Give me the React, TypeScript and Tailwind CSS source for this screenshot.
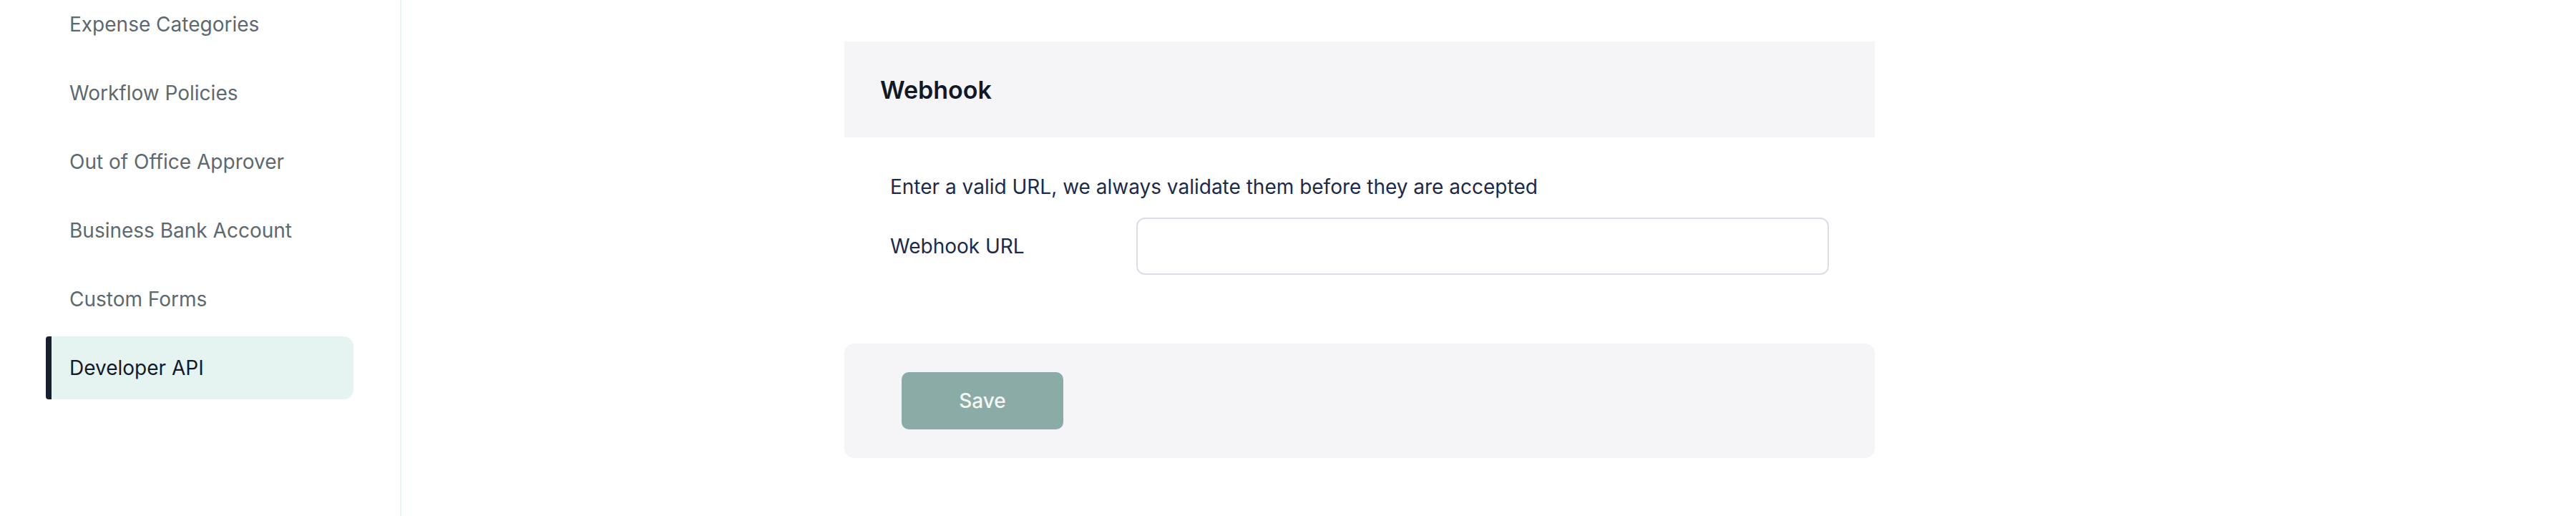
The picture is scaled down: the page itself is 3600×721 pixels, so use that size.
import React from "react"

const items = [
  "Expense Categories",
  "Workflow Policies",
  "Out of Office Approver",
  "Business Bank Account",
  "Custom Forms",
  "Developer API",
]

function Sidebar() {
  return (
    <aside className="w-[561px] shrink-0 border-r-2 border-[#e6f3f0] h-full">
      <nav className="-mt-[10px] pl-[64px] pr-[65px] flex flex-col gap-[8px]">
        {items.map((label) => {
          const active = label === "Developer API"
          return (
            <div
              key={label}
              className={
                active
                  ? "h-[88px] flex items-center rounded-[14px] rounded-l-[4px] border-l-[8px] border-[#18202f] bg-[#e6f4f1] pl-[25px] text-[28px] text-[#131a2b]"
                  : "h-[88px] flex items-center pl-[33px] text-[28px] text-[#5e686f]"
              }
            >
              {label}
            </div>
          )
        })}
      </nav>
    </aside>
  )
}

export default function App() {
  return (
    <div
      className="flex h-[721px] w-full overflow-hidden bg-white"
      style={{ fontFamily: "Inter, 'Noto Sans', sans-serif" }}
    >
      <Sidebar />
      <main className="flex-1 pl-[619px] pt-[58px]">
        <div className="w-[1440px]">
          <div className="h-[134px] bg-[#f5f5f7] flex items-center px-[50px]">
            <h2 className="text-[34px] font-semibold text-[#111827]">Webhook</h2>
          </div>
          <div className="px-[64px] pt-[49px] pb-[96px]">
            <p className="text-[28px] leading-[40px] text-[#1c2a4b]">
              Enter a valid URL, we always validate them before they are accepted
            </p>
            <div className="mt-[23px] flex items-center">
              <label className="w-[344px] text-[28px] leading-[40px] text-[#1c2a4b]">Webhook URL</label>
              <input
                type="text"
                className="flex-1 h-[80px] rounded-[12px] border-2 border-[#dcdee5] bg-white px-[24px] text-[28px] outline-none"
              />
            </div>
          </div>
          <div className="h-[160px] rounded-[14px] bg-[#f5f5f7] pl-[80px] pt-[40px]">
            <button className="w-[226px] h-[80px] rounded-[10px] bg-[#8aaba6] text-[28px] font-medium text-[#f4f7f6]">
              Save
            </button>
          </div>
        </div>
      </main>
    </div>
  )
}
